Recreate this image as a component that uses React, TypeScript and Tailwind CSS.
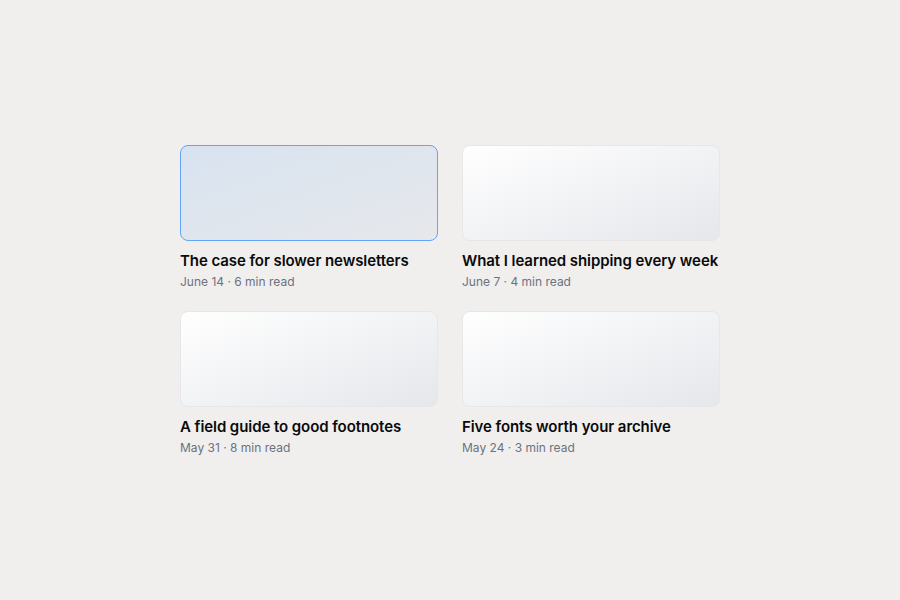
const posts = [
  { title: "The case for slower newsletters", date: "June 14", mins: 6, active: true },
  { title: "What I learned shipping every week", date: "June 7", mins: 4 },
  { title: "A field guide to good footnotes", date: "May 31", mins: 8 },
  { title: "Five fonts worth your archive", date: "May 24", mins: 3 },
];

export default function App() {
  return (
    <div
      className="min-h-screen bg-[#f0efee] pt-[145px]"
      style={{ fontFamily: "Inter, 'Noto Sans', sans-serif" }}
    >
      <div className="mx-auto grid grid-cols-2 gap-x-6 gap-y-[21px] w-[540px]">
        {posts.map((p) => (
          <a key={p.title} href="#" className="block">
            <div
              className={
                p.active
                  ? "h-24 rounded-lg border border-[#60a5fa] bg-gradient-to-br from-[#d8e3f0] to-[#e6e8eb]"
                  : "h-24 rounded-lg border border-[#e5e7eb] bg-gradient-to-br from-white to-[#e5e7eb]"
              }
            />
            <h3 className="mt-2.5 whitespace-nowrap text-[15px] leading-5 font-semibold tracking-[-0.005em] text-[#0a0a0a]">
              {p.title}
            </h3>
            <p className="mt-[3px] text-xs leading-4 text-[#6b7280]">
              {p.date} · {p.mins} min read
            </p>
          </a>
        ))}
      </div>
    </div>
  );
}
